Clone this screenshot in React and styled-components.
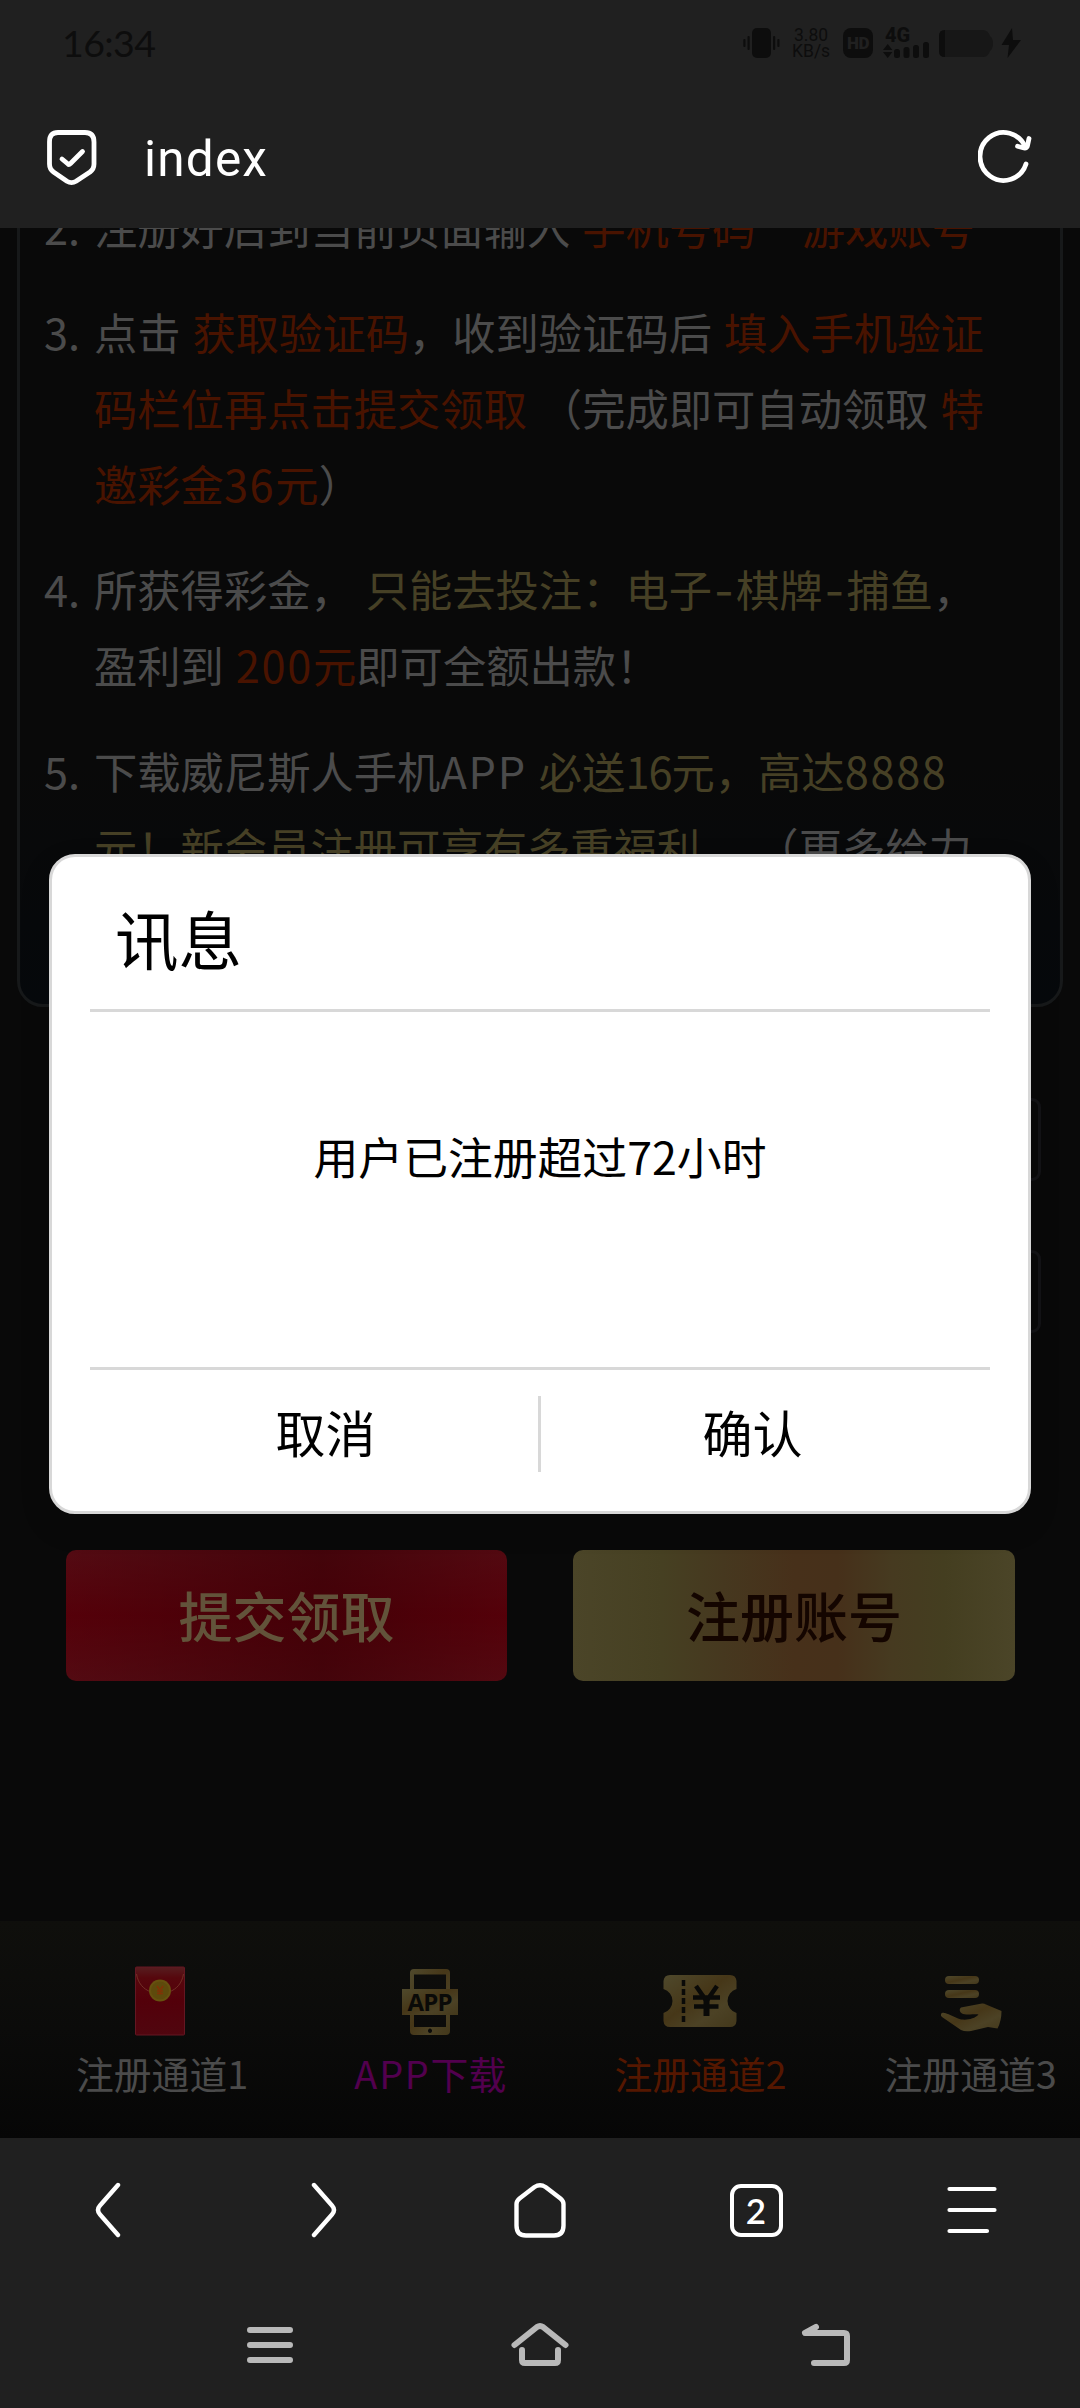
import React from "react";
import styled, { createGlobalStyle } from "styled-components";

const GlobalStyle = createGlobalStyle`
  * { box-sizing: border-box; }
  body { margin: 0; background: #202020; }
  button { border: 0; background: none; padding: 0; margin: 0; font: inherit; color: inherit; }
  svg { display: block; flex: none; }
`;

const Page = styled.div`
  width: 1080px;
  height: 2408px;
  display: grid;
  grid-template-rows: 228px 1910px 270px;
  overflow: hidden;
  background: #202020;
  font-family: "Noto Sans CJK SC", sans-serif;
`;

/* ---------- top ---------- */

const Top = styled.header`
  display: grid;
  grid-template-rows: 84px 144px;
`;

const StatusBar = styled.div`
  display: flex;
  align-items: center;
  padding: 1px 59px 0 62px;
  color: #0d0d0d;
`;

const Clock = styled.div`
  flex: 1;
  padding-top: 1px;
  font-family: Lato, sans-serif;
  font-size: 37.5px;
  line-height: 40px;
  letter-spacing: -0.6px;
`;

const StatusIcons = styled.div`
  display: flex;
  align-items: center;
  height: 32px;
`;

const Speed = styled.div`
  display: grid;
  grid-template-rows: 16px 16px;
  justify-items: center;
  width: 38px;
  margin: 0 13px 0 12px;
  font-family: Roboto, sans-serif;
  font-size: 17.5px;
  line-height: 16px;
  white-space: nowrap;
`;

const HdBadge = styled.div`
  width: 30px;
  height: 30px;
  margin-right: 10px;
  border-radius: 8px;
  background: #0d0d0d;
  color: #202020;
  font: 900 17px/31px Roboto, sans-serif;
  letter-spacing: -0.4px;
  text-align: center;
`;

const Signal = styled.div`
  display: flex;
  flex-direction: column;
  width: 48px;
  height: 30px;
  margin-right: 8px;
`;

const Network = styled.div`
  height: 15px;
  padding-left: 2px;
  font: 800 20px/15px Roboto, sans-serif;
`;

const AddressBar = styled.div`
  display: flex;
  align-items: center;
  padding: 2px 48px 0 46px;
  color: #fff;
`;

const PageTitle = styled.div`
  flex: 1;
  padding: 4px 0 0 46px;
  font: 400 49.5px/60px Roboto, sans-serif;
  letter-spacing: 1.2px;
`;

const Reload = styled.button`
  padding-bottom: 4px;
`;

/* ---------- content ---------- */

const Viewport = styled.main`
  position: relative;
  display: flex;
  flex-direction: column;
  overflow: hidden;
  background: #090909;
`;

const Rules = styled.section`
  flex: none;
  height: 806px;
  margin: -27px 17px 0;
  padding: 0 24px;
  border: 3px solid #17191a;
  border-radius: 26px;
  background: linear-gradient(#090909 70%, #06090c);
`;

const RuleList = styled.ol`
  list-style: none;
  margin: -15.5px 0 0;
  padding: 0;
  display: flex;
  flex-direction: column;
  gap: 30.3px;
`;

const Rule = styled.li`
  display: grid;
  grid-template-columns: 50px 1fr;
  font-size: 43.3px;
  line-height: 75.6px;
  color: #4b4b4b;
  white-space: nowrap;
  word-spacing: 2.2px;
`;

const Line = styled.div`
  height: 75.6px;
`;

const Mark = styled.span`
  color: ${(p) => (p.$tone === "red" ? "#491300" : "#464025")};
`;

const Num = styled.span`
  letter-spacing: ${(p) => p.$gap ?? 1.7}px;
`;

const Dash = styled.span`
  margin-left: 2px;
  font-family: Inter, sans-serif;
  line-height: 0;
  letter-spacing: 2px;
`;

const Gap = styled.span`
  letter-spacing: 3px;
`;

const Form = styled.div`
  display: flex;
  flex-direction: column;
  gap: 69px;
  padding: 91px 39px 0 240px;
`;

const Field = styled.div`
  height: 83px;
  border: 3px solid #131316;
  border-radius: 9px;
`;

const Actions = styled.div`
  display: grid;
  grid-template-columns: 441px 442px;
  gap: 66px;
  padding: 217px 0 0 66px;
`;

const Action = styled.button`
  height: 131px;
  padding-bottom: 3px;
  border-radius: 10px;
  font-size: 54px;
  font-weight: 500;
  color: ${(p) => (p.$gold ? "#140500" : "#62533a")};
  background: ${(p) =>
    p.$gold
      ? "linear-gradient(90deg, #4b4528 0%, #464022 20%, #46381f 34%, #47301a 50%, #46301a 60%, #463a20 72%, #443e20 84%, #4b4528 100%)"
      : "linear-gradient(90deg, rgba(82,0,8,.35) 0%, rgba(62,0,6,.75) 58%, rgba(82,0,8,.45) 100%), linear-gradient(#541119, #56000a 50%, #541018)"};
`;

const Tabs = styled.nav`
  display: flex;
  height: 217px;
  margin-top: auto;
  padding-left: 25px;
  background: linear-gradient(#0f0f0c, #0b0b0a 50%, #060606);
  overflow: hidden;
`;

const Tab = styled.a`
  flex: none;
  width: 270.2px;
  display: flex;
  flex-direction: column;
  align-items: center;
  padding-top: 44px;
  color: ${(p) => p.$color || "#4b4b4b"};
`;

const TabLabel = styled.span`
  margin-top: 11px;
  font-size: 37.8px;
  line-height: 50px;
  white-space: nowrap;
`;

/* ---------- dialog ---------- */

const Overlay = styled.div`
  position: absolute;
  inset: 0;
  display: flex;
  align-items: center;
  justify-content: center;
`;

const Dialog = styled.div`
  width: 982px;
  height: 660px;
  margin-top: 2px;
  display: grid;
  grid-template-rows: 155px 358px 1fr;
  padding: 0 38px;
  border: 3px solid #d8d8d8;
  border-radius: 26px;
  background: #fff;
  color: #000;
  box-shadow: 0 12px 30px rgba(0, 0, 0, 0.15);
`;

const DialogTitle = styled.h2`
  margin: 0;
  padding: 0 0 0 25px;
  border-bottom: 3px solid #d8d8d8;
  font-size: 63.5px;
  font-weight: 400;
  line-height: 160px;
`;

const DialogBody = styled.div`
  border-bottom: 3px solid #d8d8d8;
  padding-top: 111px;
  text-align: center;
  font-size: 44.8px;
  line-height: 66px;
`;

const DialogActions = styled.div`
  display: grid;
  grid-template-columns: 448px 3px 1fr;
`;

const DialogButton = styled.button`
  font-size: 50px;
  line-height: 72px;
  padding: ${(p) => (p.$right ? "0 26px 20px 0" : "0 0 20px 23px")};
`;

const Divider = styled.div`
  height: 76px;
  margin-top: 26px;
  background: #d8d8d8;
`;

/* ---------- bottom ---------- */

const Bottom = styled.footer`
  display: grid;
  grid-template-rows: 144px 126px;
`;

const BrowserNav = styled.nav`
  display: grid;
  grid-template-columns: repeat(5, 216px);
  place-items: center;
  color: #fff;
`;

const TabCount = styled.div`
  width: 53px;
  height: 53px;
  border: 4.4px solid #fff;
  border-radius: 11px;
  font: 600 35px/45px Lato, sans-serif;
  text-align: center;
`;

const SystemNav = styled.nav`
  display: grid;
  grid-template-columns: repeat(3, 270px);
  justify-content: center;
  place-items: center;
  color: #b9b9b9;
`;

const Stroke = ({ x = 0, w, h, sw = 4.4, children }) => (
  <svg width={w} height={h} viewBox={`${x} 0 ${w} ${h}`} fill="none" stroke="currentColor" strokeWidth={sw} strokeLinecap="round" strokeLinejoin="round">
    {children}
  </svg>
);

const GoldDefs = () => (
  <defs>
    <linearGradient id="gold" x1="0" y1="0" x2="1" y2="1">
      <stop offset="0" stopColor="#4f492c" />
      <stop offset=".45" stopColor="#463718" />
      <stop offset=".7" stopColor="#4c4225" />
      <stop offset="1" stopColor="#43381b" />
    </linearGradient>
  </defs>
);

const Envelope = () => (
  <svg width="50" height="72" viewBox="0 0 50 72">
    <defs>
      <linearGradient id="env" x1="0" y1="0" x2="0" y2="1">
        <stop offset="0" stopColor="#561e20" />
        <stop offset=".16" stopColor="#56070d" />
        <stop offset=".5" stopColor="#53000a" />
        <stop offset="1" stopColor="#50060f" />
      </linearGradient>
    </defs>
    <rect x=".5" y="2" width="49" height="68" rx="1" fill="url(#env)" stroke="#641722" strokeWidth="1" />
    <path d="M1.500 9C3 18 8 24 16 27M48.500 9C47 18 42 24 34 27" fill="none" stroke="#733127" strokeWidth="1" />
    <circle cx="25" cy="25.500" r="11" fill="#66510f" />
    <circle cx="25" cy="25.500" r="9" fill="#5e4a0c" />
    <path d="M22 21l3 4.500 3-4.500M25 25.500V29.500M22 26h6M22 28.500h6" fill="none" stroke="#813305" strokeWidth="1.600" />
  </svg>
);

const AppIcon = () => (
  <svg width="56" height="72" viewBox="0 0 56 72">
    <GoldDefs />
    <path fillRule="evenodd" fill="url(#gold)" d="M12 4H44Q48 4 48 8V66Q48 70 44 70H12Q8 70 8 66V8Q8 4 12 4ZM12 9.500V62H44V9.500ZM28 63.500a2 2.300 0 1 0 .01 0Z" />
    <rect y="24" width="56" height="26" fill="url(#gold)" />
    <text x="28" y="45.500" textAnchor="middle" fontFamily="Open Sans, sans-serif" fontWeight="700" fontSize="24" textLength="45" fill="#0a0a08">APP</text>
  </svg>
);

const Ticket = () => (
  <svg width="74" height="72" viewBox="0 0 74 72">
    <GoldDefs />
    <path fill="url(#gold)" d="M7 10H67Q73 10 73.500 16V24A12.500 12.500 0 0 0 73.500 48V56Q73 62 67 62H7Q1 62 .5 56V48A12.500 12.500 0 0 0 .5 24V16Q1 10 7 10Z" />
    <path d="M20.500 15V60" stroke="#0a0a08" strokeWidth="3.500" strokeDasharray="6 3" />
    <path d="M33 21l10.500 15L54 21M30 32.500H57M31 41.500H55.500" fill="none" stroke="#0a0a08" strokeWidth="4.500" />
    <path d="M43.500 34V51" stroke="#0a0a08" strokeWidth="6" />
  </svg>
);

const Hand = () => (
  <svg width="62" height="72" viewBox="0 0 62 72">
    <GoldDefs />
    <rect x="5" y="11" width="34" height="8" rx="4" fill="url(#gold)" />
    <rect x="5" y="25" width="34" height="8" rx="4" fill="url(#gold)" />
    <path fill="url(#gold)" d="M1 49C2 46.500 6 48 8 49L18 53.500C24 56 34 54.500 38.500 49.500C36 48.500 26 50.500 22 48.500C19.500 47 19 44 21 42.500L42 38.500Q44 38.200 46 39.500L61.500 46Q61.500 56 57.500 63.500L48 62L31 66Q25 67 21 65L2 52Q.5 51 1 49Z" />
  </svg>
);

const Vibrate = () => (
  <svg width="37" height="30" viewBox="0 0 37 30" fill="currentColor">
    <rect x="9" width="19" height="30" rx="5" />
    <rect x=".3" y="11" width="2.200" height="8" rx="1" />
    <rect x="4.500" y="8" width="2.200" height="14" rx="1" />
    <rect x="30" y="8" width="2.200" height="14" rx="1" />
    <rect x="34.300" y="11" width="2.200" height="8" rx="1" />
  </svg>
);

const Bars = () => (
  <svg width="48" height="15" viewBox="0 0 48 15" fill="currentColor" overflow="visible">
    <path d="M0 7l4.700-6 4.700 6zM0 9h9.400l-4.700 6z" />
    <rect x="11" y="6" width="6" height="9" rx="2.500" />
    <rect x="20.500" y="4" width="6" height="11" rx="2.500" />
    <rect x="30" y="2" width="6" height="13" rx="2.500" />
    <rect x="40" y="-1" width="6" height="16" rx="2.500" />
  </svg>
);

const Battery = () => (
  <svg width="54" height="28" viewBox="0 0 54 28">
    <path d="M6 1H44Q49 1 51 7Q54 9 54 14.500Q54 20 51 22Q49 28 44 28H6Q0 28 0 22V7Q0 1 6 1Z" fill="#171717" />
    <path d="M6 1V28Q0 28 0 22V7Q0 1 6 1Z" fill="#0d0d0d" />
  </svg>
);

export default function App() {
  return (
    <>
      <GlobalStyle />
      <Page>
        <Top>
          <StatusBar>
            <Clock>16:34</Clock>
            <StatusIcons>
              <Vibrate />
              <Speed>
                <span>3.80</span>
                <span>KB/s</span>
              </Speed>
              <HdBadge>HD</HdBadge>
              <Signal>
                <Network>4G</Network>
                <Bars />
              </Signal>
              <Battery />
              <svg width="28" height="30" viewBox="0 0 28 30" fill="currentColor">
                <path d="M19 0L8.500 17h7.500l-1.500 13L28 12h-8z" />
              </svg>
            </StatusIcons>
          </StatusBar>
          <AddressBar>
            <Stroke w={52} h={58} sw={4.8}>
              <path d="M12 4.500H39Q48 4.500 48 14V36Q48 41 44 44L30 53.200Q25.500 56 21 53.200L7.500 44Q3.500 41 3.500 36V14Q3.500 4.500 12 4.500Z" />
              <path d="M16 31l6 5Q23 37 24.500 35.500L36.500 23.500" />
            </Stroke>
            <PageTitle>index</PageTitle>
            <Reload>
              <Stroke w={54} h={56} sw={4.8}>
                <path d="M48 37A23.600 24 0 1 1 47.500 20.500" />
                <path d="M39.500 19.300l6.500 1.700Q49 21.500 49.500 18.500L51 11.500" />
              </Stroke>
            </Reload>
          </AddressBar>
        </Top>

        <Viewport>
          <Rules>
            <RuleList>
              <Rule>
                <span>2.</span>
                <div>
                  <Line>注册好后到当前页面输入 <Mark $tone="red">手机号码<Gap>　</Gap>游戏账号</Mark></Line>
                </div>
              </Rule>
              <Rule>
                <span>3.</span>
                <div>
                  <Line>点击 <Mark $tone="red">获取验证码</Mark>，收到验证码后 <Mark $tone="red">填入手机验证</Mark></Line>
                  <Line><Mark $tone="red">码栏位再点击提交领取</Mark> （完成即可自动领取 <Mark $tone="red">特</Mark></Line>
                  <Line><Mark $tone="red">邀彩金<Num>36</Num>元</Mark>）</Line>
                </div>
              </Rule>
              <Rule>
                <span>4.</span>
                <div>
                  <Line>所获得彩金， <Mark>只能去投注：电子<Dash>-</Dash>棋牌<Dash>-</Dash>捕鱼</Mark>，</Line>
                  <Line>盈利到 <Mark $tone="red"><Num>200</Num>元</Mark>即可全额出款！</Line>
                </div>
              </Rule>
              <Rule>
                <span>5.</span>
                <div>
                  <Line>下载威尼斯人手机<Num $gap={1.8}>APP</Num> <Mark>必送<Num $gap={-1}>16</Num>元，高达<Num>8888</Num></Mark></Line>
                  <Line><Mark>元！新会员注册可享有多重福利</Mark>。 （更多给力</Line>
                </div>
              </Rule>
            </RuleList>
          </Rules>
          <Form>
            <Field />
            <Field />
          </Form>
          <Actions>
            <Action>提交领取</Action>
            <Action $gold>注册账号</Action>
          </Actions>
          <Tabs>
            <Tab><Envelope /><TabLabel>注册通道<Num $gap={-4}>1</Num></TabLabel></Tab>
            <Tab $color="#52004e"><AppIcon /><TabLabel><Num $gap={1.8}>APP</Num>下载</TabLabel></Tab>
            <Tab $color="#551700"><Ticket /><TabLabel>注册通道2</TabLabel></Tab>
            <Tab><Hand /><TabLabel>注册通道3</TabLabel></Tab>
          </Tabs>

          <Overlay>
            <Dialog>
              <DialogTitle>讯息</DialogTitle>
              <DialogBody>用户已注册超过72小时</DialogBody>
              <DialogActions>
                <DialogButton>取消</DialogButton>
                <Divider />
                <DialogButton $right>确认</DialogButton>
              </DialogActions>
            </Dialog>
          </Overlay>
        </Viewport>

        <Bottom>
          <BrowserNav>
            <Stroke w={26} h={56}><path d="M23 3L5 23.500Q1 28 5 32.500L23 53" /></Stroke>
            <Stroke w={26} h={56}><path d="M3 3L21 23.500Q25 28 21 32.500L3 53" /></Stroke>
            <Stroke w={56} h={56}>
              <path d="M22.500 5Q28 1.500 33.500 5L48.500 16.500Q51.500 19 51.500 22V43.500Q51.500 53.500 42 53.500H14Q4.500 53.500 4.500 43.500V22Q4.500 19 7.500 16.500Z" />
            </Stroke>
            <TabCount>2</TabCount>
            <Stroke w={52} h={48} sw={4.2}><path d="M3.500 3H48.500M3.500 24H48.500M3.500 45H41" /></Stroke>
          </BrowserNav>
          <SystemNav>
            <Stroke w={46} h={36} sw={6}><path d="M3 3H43M3 18H43M3 33H43" /></Stroke>
            <Stroke w={58} h={46} sw={6}>
              <path d="M3.500 23L26 5Q29 3 32 5L54.500 23M11 28V38Q11 41 14 41H44Q47 41 47 38V28" />
            </Stroke>
            <Stroke x={-31} w={79} h={46} sw={6}><path d="M14 5L3 11H42Q45 11 45 14V38Q45 41 42 41H12" /></Stroke>
          </SystemNav>
        </Bottom>
      </Page>
    </>
  );
}
